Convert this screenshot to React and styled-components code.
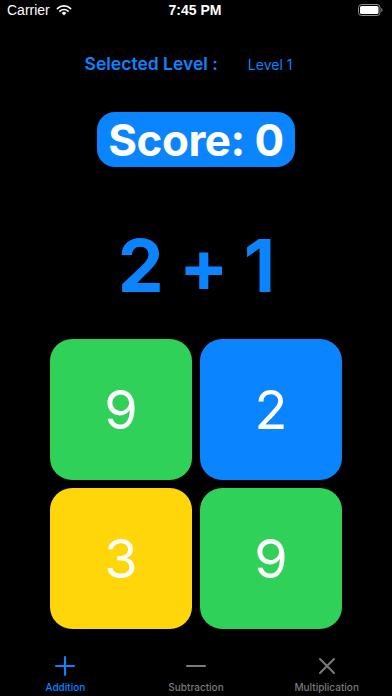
import React from 'react'
import styled, { createGlobalStyle } from 'styled-components'

const GlobalStyle = createGlobalStyle`
    html, body {
        margin: 0;
        padding: 0;
        background: #000;
    }
    body {
        font-family: Inter, "Noto Sans", "Liberation Sans", sans-serif;
        -webkit-font-smoothing: antialiased;
    }
`

const BLUE = '#0a84ff'

const tiles = [
    { value: 9, color: '#30d158' },
    { value: 2, color: BLUE },
    { value: 3, color: '#ffd60a' },
    { value: 9, color: '#30d158' },
]

const tabs = [
    { label: 'Addition', active: true, icon: 'plus' },
    { label: 'Subtraction', active: false, icon: 'minus' },
    { label: 'Multiplication', active: false, icon: 'times' },
]

const TabIcon = ({ kind, color }) => (
    <svg width="22" height="22" viewBox="0 0 22 22" fill="none" stroke={color} strokeWidth="2" strokeLinecap="round">
        {kind === 'plus' && <path d="M11 2v18M2 11h18" />}
        {kind === 'minus' && <path d="M2 11h18" />}
        {kind === 'times' && <path d="M4 4l14 14M18 4L4 18" />}
    </svg>
)

const App = () => {
    return (
        <>
            <GlobalStyle />
            <Screen>
                <StatusBar>
                    <Carrier>
                        Carrier
                        <svg width="16" height="12" viewBox="0 0 16 12">
                            <path d="M8 11.5l2.3-2.6a3.3 3.3 0 0 0-4.6 0z" fill="#fff" />
                            <path d="M3.9 7.2a5.8 5.8 0 0 1 8.2 0" stroke="#fff" strokeWidth="1.7" fill="none" strokeLinecap="round" />
                            <path d="M1.4 4.6a9.4 9.4 0 0 1 13.2 0" stroke="#fff" strokeWidth="1.7" fill="none" strokeLinecap="round" />
                        </svg>
                    </Carrier>
                    <Clock>7:45 PM</Clock>
                    <Battery>
                        <svg width="25" height="12" viewBox="0 0 25 12">
                            <rect x="0.5" y="0.5" width="21.5" height="11" rx="3" stroke="#8e8e93" fill="none" />
                            <rect x="2" y="2" width="18.5" height="8" rx="1.6" fill="#fff" />
                            <path d="M23.3 4v4c.8-.3 1.2-1 1.2-2s-.4-1.7-1.2-2z" fill="#8e8e93" />
                        </svg>
                    </Battery>
                </StatusBar>

                <Content>
                    <LevelRow>
                        <LevelTitle>Selected Level :</LevelTitle>
                        <LevelValue>Level 1</LevelValue>
                    </LevelRow>

                    <ScorePill>Score: 0</ScorePill>

                    <Question>2 + 1</Question>

                    <TileGrid>
                        {tiles.map((t, i) => (
                            <Tile key={i} $color={t.color}>{t.value}</Tile>
                        ))}
                    </TileGrid>
                </Content>

                <TabBar>
                    {tabs.map((tab) => (
                        <TabItem key={tab.label} $active={tab.active}>
                            <TabIcon kind={tab.icon} color={tab.active ? BLUE : '#7a7a7f'} />
                            <span>{tab.label}</span>
                        </TabItem>
                    ))}
                </TabBar>
            </Screen>
        </>
    )
}

const Screen = styled.div`
    width: 392px;
    height: 696px;
    background: #000;
    display: flex;
    flex-direction: column;
    overflow: hidden;
    color: #fff;
`

const StatusBar = styled.div`
    height: 20px;
    padding: 0 9px 0 7px;
    display: grid;
    grid-template-columns: 1fr auto 1fr;
    align-items: center;
    font-size: 14px;
    font-family: "Liberation Sans", Inter, sans-serif;
`

const Carrier = styled.div`
    display: flex;
    align-items: center;
    gap: 6px;
    font-size: 14px;
`

const Clock = styled.div`
    font-weight: 600;
    font-size: 14px;
`

const Battery = styled.div`
    display: flex;
    justify-content: flex-end;
`

const Content = styled.div`
    flex: 1;
    display: flex;
    flex-direction: column;
    align-items: center;
`

const LevelRow = styled.div`
    margin-top: 33px;
    margin-right: 15px;
    display: flex;
    align-items: baseline;
    gap: 30px;
    color: ${BLUE};
`

const LevelTitle = styled.div`
    font-size: 17.5px;
    font-weight: 600;
`

const LevelValue = styled.div`
    font-size: 14px;
    font-weight: 400;
`

const ScorePill = styled.div`
    margin-top: 38px;
    height: 55px;
    padding: 0 11px;
    border-radius: 18px;
    background: ${BLUE};
    color: #fff;
    font-size: 44px;
    font-weight: 700;
    display: flex;
    align-items: center;
    letter-spacing: -0.5px;
`

const Question = styled.div`
    margin-top: 58px;
    height: 82px;
    font-size: 73px;
    font-weight: 700;
    color: ${BLUE};
    line-height: 82px;
    letter-spacing: -1px;
`

const TileGrid = styled.div`
    margin-top: 32px;
    display: grid;
    grid-template-columns: repeat(2, 142px);
    grid-auto-rows: 141px;
    gap: 8px;
`

const Tile = styled.div`
    background: ${(p) => p.$color};
    border-radius: 22px;
    display: flex;
    align-items: center;
    justify-content: center;
    font-size: 54px;
    font-weight: 400;
    color: #fff;
`

const TabBar = styled.div`
    height: 49px;
    display: grid;
    grid-template-columns: repeat(3, 1fr);
`

const TabItem = styled.div`
    display: flex;
    flex-direction: column;
    align-items: center;
    justify-content: flex-start;
    padding-top: 8px;
    gap: 4px;
    color: ${(p) => (p.$active ? BLUE : '#7a7a7f')};
    font-size: 10px;
    font-weight: 500;
`

export default App
